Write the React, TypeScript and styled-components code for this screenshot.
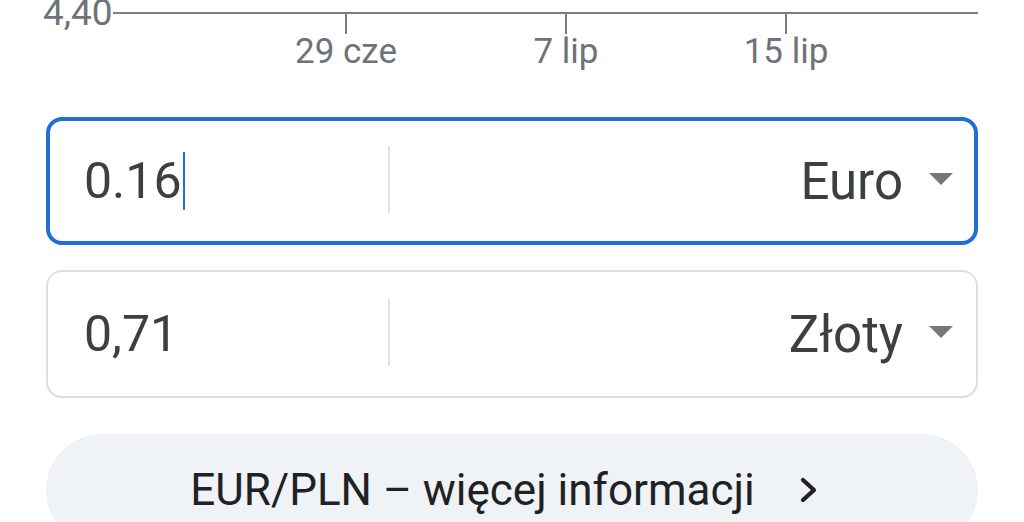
import React from 'react';
import styled, { createGlobalStyle } from 'styled-components';

const GlobalStyle = createGlobalStyle`
    html, body {
        margin: 0;
        padding: 0;
        background: #ffffff;
    }
    body {
        font-family: Roboto, "Liberation Sans", Arial, sans-serif;
        overflow: hidden;
    }
`;

const Page = styled.div`
    box-sizing: border-box;
    width: 1024px;
    padding: 0 46px;
`;

const Chart = styled.div`
    display: flex;
    flex-direction: column;
`;

const AxisRow = styled.div`
    display: flex;
    align-items: center;
    height: 26px;
`;

const YLabel = styled.span`
    font-size: 37px;
    line-height: 26px;
    color: #6f7378;
    margin-left: -3px;
`;

const AxisLine = styled.div`
    flex: 1;
    height: 2px;
    background: #7b7d80;
`;

// ticks hang from the axis line, which sits mid-row
const TickRow = styled.div`
    display: flex;
    margin-left: 190px;
    margin-top: -12px;
`;

const Tick = styled.div`
    width: 220px;
    display: flex;
    flex-direction: column;
    align-items: center;
`;

const TickMark = styled.div`
    width: 2px;
    height: 20px;
    background: #7b7d80;
`;

const TickLabel = styled.span`
    font-size: 35px;
    line-height: 36px;
    color: #6f7378;
    white-space: nowrap;
`;

const Boxes = styled.div`
    display: flex;
    flex-direction: column;
    gap: 25px;
    margin-top: 47px;
`;

const ConverterBox = styled.div<{ $focused?: boolean }>`
    box-sizing: border-box;
    height: 128px;
    display: flex;
    align-items: center;
    border-radius: 16px;
    border: ${p => (p.$focused ? '4px solid #1f6fd6' : '2px solid #dcdee1')};
    padding-left: ${p => (p.$focused ? 34 : 36)}px;
    padding-right: ${p => (p.$focused ? 21 : 23)}px;
`;

const ValuePart = styled.div`
    width: 304px;
    display: flex;
    align-items: center;
`;

const Amount = styled.span`
    font-size: 50px;
    color: #3c4043;
`;

const Caret = styled.span`
    width: 2px;
    height: 58px;
    margin-left: 1px;
    background: #1f6fd6;
`;

const Divider = styled.div`
    width: 2px;
    height: 67px;
    background: #dfe1e4;
    margin-bottom: 4px;
`;

const UnitPart = styled.div`
    flex: 1;
    display: flex;
    align-items: center;
    justify-content: flex-end;
    gap: 26px;
`;

const UnitName = styled.span`
    font-size: 51px;
    color: #3c4043;
`;

const DropArrow = styled.span`
    width: 0;
    height: 0;
    border-left: 12px solid transparent;
    border-right: 12px solid transparent;
    border-top: 12px solid #75777a;
    margin-bottom: 5px;
`;

const MoreButton = styled.div`
    box-sizing: border-box;
    margin-top: 36px;
    height: 112px;
    border-radius: 56px;
    background: #f0f3f5;
    display: flex;
    align-items: center;
    justify-content: center;
    gap: 45px;
    padding-right: 16px;
`;

const MoreText = styled.span`
    font-size: 44px;
    color: #202124;
    white-space: nowrap;
`;

const Chevron = () => (
    <svg width="18" height="26" viewBox="0 0 18 26" fill="none">
        <polyline points="3,3 14,13 3,23" stroke="#202124" strokeWidth="4.2" strokeLinecap="round" strokeLinejoin="round" />
    </svg>
);

const ticks = ['29 cze', '7 lip', '15 lip'];

const App: React.FC = () => {
    return (
        <>
            <GlobalStyle />
            <Page>
                <Chart>
                    <AxisRow>
                        <YLabel>4,40</YLabel>
                        <AxisLine />
                    </AxisRow>
                    <TickRow>
                        {ticks.map(t => (
                            <Tick key={t}>
                                <TickMark />
                                <TickLabel>{t}</TickLabel>
                            </Tick>
                        ))}
                    </TickRow>
                </Chart>
                <Boxes>
                    <ConverterBox $focused>
                        <ValuePart>
                            <Amount>0.16</Amount>
                            <Caret />
                        </ValuePart>
                        <Divider />
                        <UnitPart>
                            <UnitName>Euro</UnitName>
                            <DropArrow />
                        </UnitPart>
                    </ConverterBox>
                    <ConverterBox>
                        <ValuePart>
                            <Amount>0,71</Amount>
                        </ValuePart>
                        <Divider />
                        <UnitPart>
                            <UnitName>Złoty</UnitName>
                            <DropArrow />
                        </UnitPart>
                    </ConverterBox>
                </Boxes>
                <MoreButton>
                    <MoreText>EUR/PLN – więcej informacji</MoreText>
                    <Chevron />
                </MoreButton>
            </Page>
        </>
    );
};

export default App;
